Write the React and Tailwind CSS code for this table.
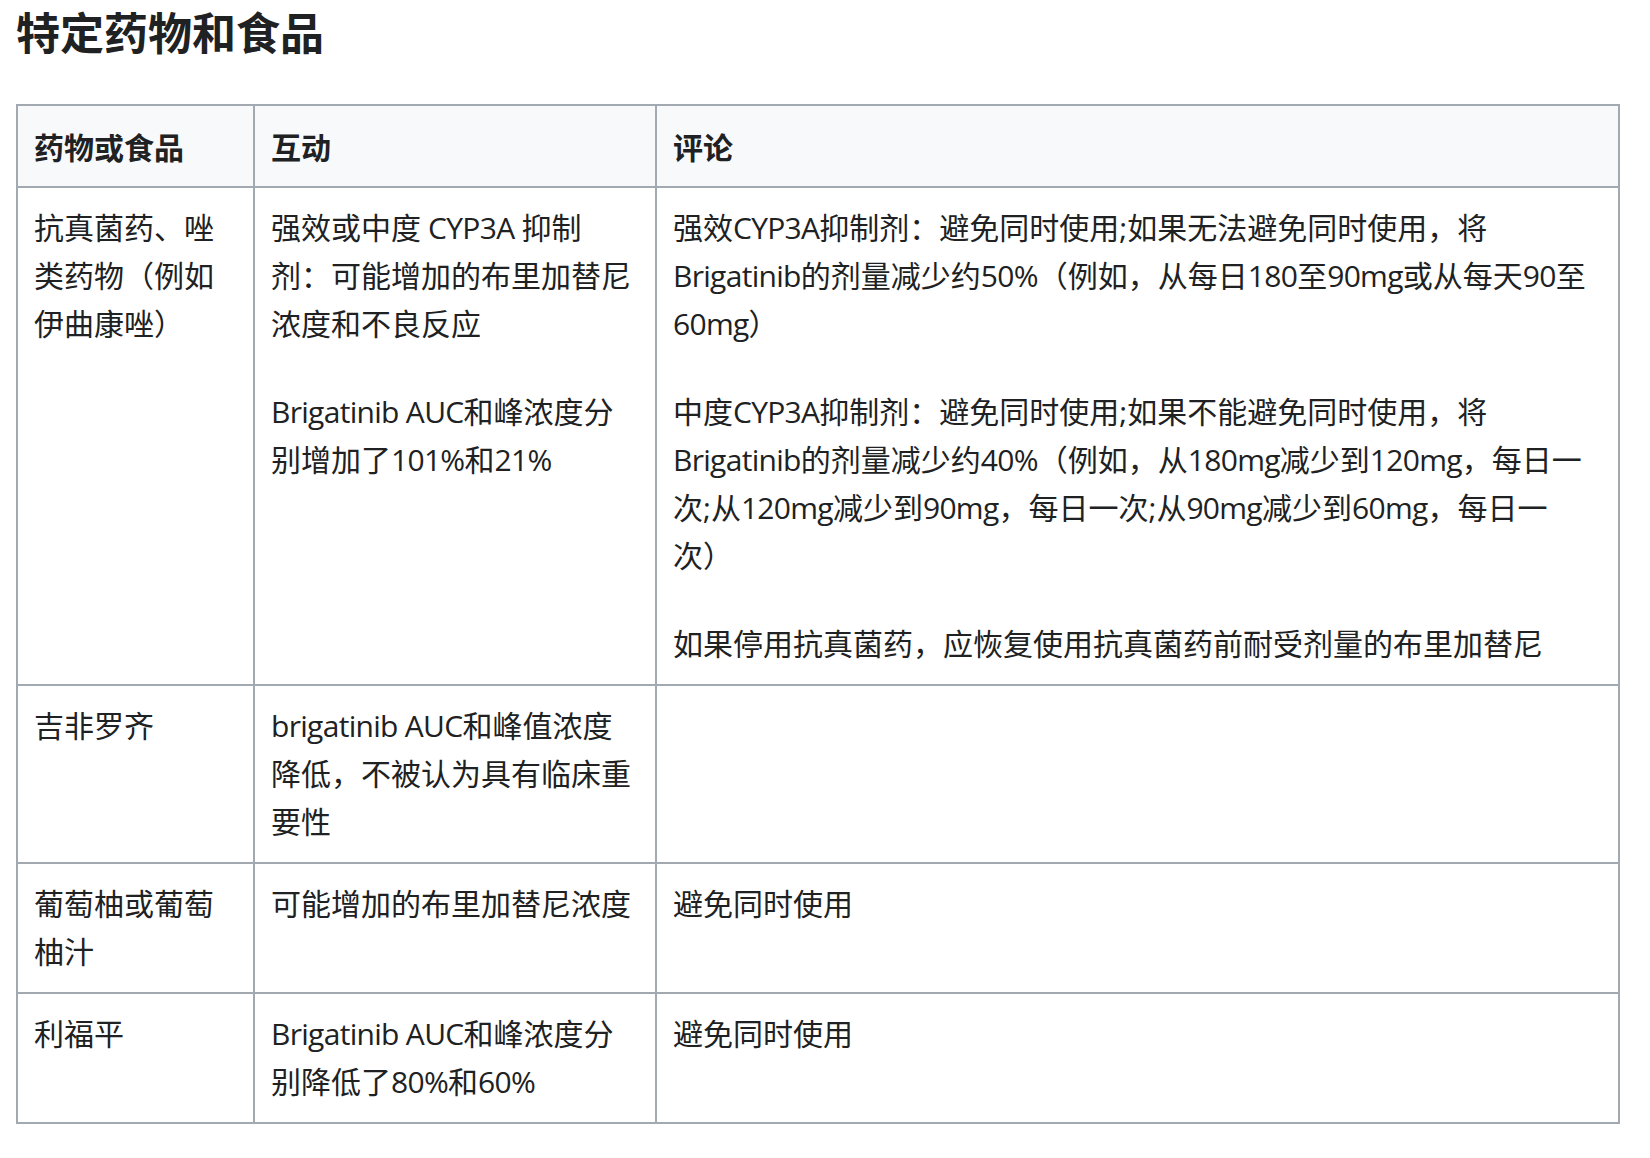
const cell = "border-r-2 border-b-2 border-[#a2a9b1] px-4 py-4 whitespace-nowrap";
const head = cell + " bg-[#f8f9fa] font-bold font-['Noto_Sans_CJK_SC',sans-serif]";

function Line({ text }) {
  const parts = text.split(/([A-Za-z0-9% ]+)/).filter((p) => p !== "");
  return (
    <div>
      {parts.map((p, i) =>
        /[A-Za-z0-9%]/.test(p) ? (
          <span key={i} className="tracking-[-0.7px]">
            {p}
          </span>
        ) : (
          <span key={i}>{p}</span>
        )
      )}
    </div>
  );
}

function Paras({ paras }) {
  return (
    <div className="flex flex-col gap-[40px]">
      {paras.map((p, i) => (
        <div key={i}>
          {p.map((l, k) => (
            <Line key={k} text={l} />
          ))}
        </div>
      ))}
    </div>
  );
}

const rows = [
  [
    [["抗真菌药、唑", "类药物（例如", "伊曲康唑）"]],
    [
      ["强效或中度 CYP3A 抑制", "剂：可能增加的布里加替尼", "浓度和不良反应"],
      ["Brigatinib AUC和峰浓度分", "别增加了101%和21%"],
    ],
    [
      [
        "强效CYP3A抑制剂：避免同时使用;如果无法避免同时使用，将",
        "Brigatinib的剂量减少约50%（例如，从每日180至90mg或从每天90至",
        "60mg）",
      ],
      [
        "中度CYP3A抑制剂：避免同时使用;如果不能避免同时使用，将",
        "Brigatinib的剂量减少约40%（例如，从180mg减少到120mg，每日一",
        "次;从120mg减少到90mg，每日一次;从90mg减少到60mg，每日一",
        "次）",
      ],
      ["如果停用抗真菌药，应恢复使用抗真菌药前耐受剂量的布里加替尼"],
    ],
  ],
  [
    [["吉非罗齐"]],
    [["brigatinib AUC和峰值浓度", "降低，不被认为具有临床重", "要性"]],
    [],
  ],
  [
    [["葡萄柚或葡萄", "柚汁"]],
    [["可能增加的布里加替尼浓度"]],
    [["避免同时使用"]],
  ],
  [
    [["利福平"]],
    [["Brigatinib AUC和峰浓度分", "别降低了80%和60%"]],
    [["避免同时使用"]],
  ],
];

export default function App() {
  return (
    <div className="min-h-[1158px] bg-white text-[#202122] font-['Open_Sans','Noto_Sans_CJK_SC',sans-serif]">
      <h2 className="m-0 pl-[16px] text-[44px] leading-[62px] font-bold font-['Noto_Sans_CJK_SC',sans-serif]">
        特定药物和食品
      </h2>
      <div className="ml-[16px] mt-[42px] w-[1604px] grid grid-cols-[237px_402px_963px] border-l-2 border-t-2 border-[#a2a9b1] text-[30px] leading-[48px]">
        <div className={head}>药物或食品</div>
        <div className={head}>互动</div>
        <div className={head}>评论</div>
        {rows.map((r, i) =>
          r.map((c, j) => (
            <div key={i + "-" + j} className={cell}>
              <Paras paras={c} />
            </div>
          ))
        )}
      </div>
    </div>
  );
}
